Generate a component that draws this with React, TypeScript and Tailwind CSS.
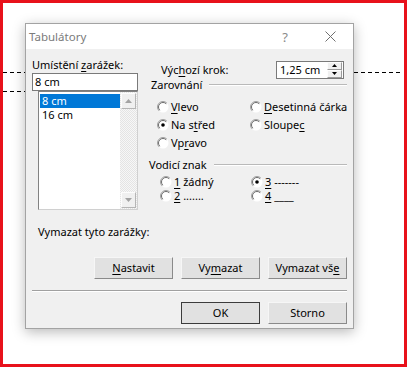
import React from "react";

function U({ children }: { children: React.ReactNode }) {
  return <span className="underline decoration-1 underline-offset-[2px]">{children}</span>;
}

function Radio({ checked }: { checked?: boolean }) {
  return (
    <svg width="12" height="12" viewBox="0 0 12 12" className="shrink-0">
      <circle cx="6" cy="6" r="5.5" fill="#ffffff" />
      <path d="M2.1 9.9 A5.5 5.5 0 0 1 9.9 2.1" fill="none" stroke="#a0a0a0" />
      <path d="M2.8 9.2 A4.5 4.5 0 0 1 9.2 2.8" fill="none" stroke="#6d6d6d" />
      {checked && <circle cx="6" cy="6" r="1.8" fill="#000" />}
    </svg>
  );
}

function Group({ title }: { title: string }) {
  return (
    <div className="flex items-center h-[14px]">
      <span>{title}</span>
      <div className="flex-1 ml-[7px] border-t border-t-[#b9b9b9] border-b border-b-white" />
    </div>
  );
}

function Button({ children, def }: { children: React.ReactNode; def?: boolean }) {
  return (
    <div
      className={
        "w-[79px] h-[22px] flex items-center justify-center bg-[#e1e1e1] " +
        (def
          ? "border border-[#3c3c3c]"
          : "border border-t-[#f6f6f6] border-l-[#f6f6f6] border-r-[#8a8a8a] border-b-[#8a8a8a]")
      }
    >
      {children}
    </div>
  );
}

function Arrow({ up }: { up?: boolean }) {
  return (
    <div className="w-[15px] h-[16px] bg-[#f0f0f0] border border-t-[#fdfdfd] border-l-[#fdfdfd] border-r-[#b5b5b5] border-b-[#b5b5b5] flex items-center justify-center">
      <svg width="7" height="4" viewBox="0 0 7 4">
        <path d={up ? "M0 4 L3.5 0 L7 4 Z" : "M0 0 L3.5 4 L7 0 Z"} fill="#a3a3a3" />
      </svg>
    </div>
  );
}

function Opt({ checked, children }: { checked?: boolean; children: React.ReactNode }) {
  return (
    <div className="flex items-center gap-[2px] whitespace-nowrap">
      <Radio checked={checked} />
      <span>{children}</span>
    </div>
  );
}

export default function App() {
  return (
    <div className="relative w-[407px] h-[367px] border-[3px] border-[#e8111b] bg-white pl-[22px] pt-[20px] font-['Noto_Sans',sans-serif] text-[11px] leading-[16px] text-black">
      {/* ruler tab guides behind the dialog */}
      <div className="absolute left-0 top-[69px] w-[22px] h-px bg-[repeating-linear-gradient(90deg,#000_0_4px,transparent_4px_7px)]" />
      <div className="absolute left-0 top-[88px] w-[22px] h-px bg-[repeating-linear-gradient(90deg,#000_0_4px,transparent_4px_7px)]" />
      <div className="absolute left-[351px] top-[69px] w-[46px] h-px bg-[repeating-linear-gradient(90deg,#000_0_4px,transparent_4px_7px)]" />

      <div className="relative w-[329px] border border-[#a3a3a3] bg-[#f0f0f0] shadow-[0_3px_12px_rgba(0,0,0,0.28)]">
        {/* title bar */}
        <div className="h-[25px] bg-white flex items-center pl-[3px] text-[#7b7b7b]">
          <span className="text-[11.5px]">Tabulátory</span>
          <span className="ml-auto mr-[37px] text-[13px] text-[#8a8a8a]">?</span>
          <svg width="11" height="11" viewBox="0 0 11 11" className="mr-[17px]">
            <path d="M0.5 0.5 L10.5 10.5 M10.5 0.5 L0.5 10.5" stroke="#6f6f6f" strokeWidth="1" />
          </svg>
        </div>

        <div className="px-[6px] pb-[4px]">
          <div className="flex">
            {/* tab stop position */}
            <div className="w-[106px] pt-[8px]">
              <div className="whitespace-nowrap">
                Umístění <U>z</U>arážek:
              </div>
              <div className="h-[18px] bg-white border border-[#7a7a7a] pl-[2px] flex items-center">8 cm</div>
              <div className="ml-[6px] w-[100px] h-[119px] bg-white border border-t-[#828282] border-l-[#828282] border-r-[#d0d0d0] border-b-[#d0d0d0] flex">
                <div className="flex-1 pt-[2px] pl-[1px] leading-[14px]">
                  <div className="bg-[#0078d7] text-white pl-[2px]">8 cm</div>
                  <div className="pl-[2px]">16 cm</div>
                </div>
                <div className="w-[17px] flex flex-col bg-[repeating-conic-gradient(#f7f7f7_0_25%,#e4e4e4_0_50%)] bg-[length:2px_2px] p-[1px]">
                  <Arrow up />
                  <div className="flex-1" />
                  <Arrow />
                </div>
              </div>
            </div>

            {/* right side */}
            <div className="ml-[11px] w-[198px] pt-[12px]">
              <div className="flex items-center h-[17px] pr-[3px]">
                <span className="pl-[12px] whitespace-nowrap">
                  Výc<U>h</U>ozí krok:
                </span>
                <div className="ml-auto w-[68px] h-[18px] bg-white border border-[#7a7a7a] flex items-center pl-[3px]">
                  <span>1,25 cm</span>
                  <div className="ml-auto mr-[1px] w-[15px] h-[16px] flex flex-col">
                    <div className="flex-1 bg-[#f0f0f0] border border-t-[#fdfdfd] border-l-[#fdfdfd] border-r-[#9a9a9a] border-b-[#9a9a9a] flex items-center justify-center">
                      <svg width="5" height="3" viewBox="0 0 5 3"><path d="M0 3 L2.5 0 L5 3 Z" fill="#000" /></svg>
                    </div>
                    <div className="flex-1 bg-[#f0f0f0] border border-t-[#fdfdfd] border-l-[#fdfdfd] border-r-[#9a9a9a] border-b-[#9a9a9a] flex items-center justify-center">
                      <svg width="5" height="3" viewBox="0 0 5 3"><path d="M0 0 L2.5 3 L5 0 Z" fill="#000" /></svg>
                    </div>
                  </div>
                </div>
              </div>

              <div className="pl-[2px]">
                <Group title="Zarovnání" />
              </div>
              <div className="mt-[6px] pl-[8px] grid grid-cols-[93px_1fr] auto-rows-[18px] items-center">
                <Opt><U>V</U>levo</Opt>
                <Opt><U>D</U>esetinná čárka</Opt>
                <Opt checked>Na s<U>t</U>řed</Opt>
                <Opt>Sloupe<U>c</U></Opt>
                <Opt>Vp<U>r</U>avo</Opt>
              </div>

              <div className="mt-[6px]">
                <Group title="Vodicí znak" />
              </div>
              <div className="mt-[3px] pl-[11px] grid grid-cols-[91px_1fr] auto-rows-[14px] items-center">
                <Opt><U>1</U> žádný</Opt>
                <Opt checked><U>3</U> -------</Opt>
                <Opt><U>2</U> .......</Opt>
                <Opt><U>4</U> ____</Opt>
              </div>
            </div>
          </div>

          <div className="mt-[14px] pl-[6px]">Vymazat tyto zarážky:</div>

          <div className="mt-[17px] flex justify-end gap-[8px]">
            <Button><span><U>N</U>astavit</span></Button>
            <Button><span>Vy<U>m</U>azat</span></Button>
            <Button><span>Vymazat vš<U>e</U></span></Button>
          </div>

          <div className="mt-[11px] border-t border-t-[#a0a0a0] border-b border-b-white" />

          <div className="mt-[10px] flex justify-end gap-[8px]">
            <Button def>OK</Button>
            <Button>Storno</Button>
          </div>
        </div>
      </div>
    </div>
  );
}
